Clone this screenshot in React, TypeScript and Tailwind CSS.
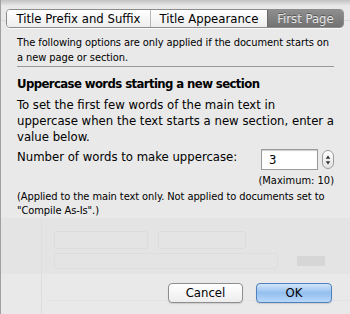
const font = "font-['DejaVu_Sans','Liberation_Sans',sans-serif] [font-stretch:condensed]"

// faint shapes of the window that shows through the translucent sheet
function Backdrop() {
  return (
    <div className="pointer-events-none absolute inset-0">
      <div className="absolute inset-x-0 top-0 h-[6px] bg-gradient-to-b from-[#c2c2c2] to-transparent" />
      <div className="absolute inset-x-0 top-[20px] h-px bg-[#d8d8d8]" />
      <div className="absolute inset-x-0 top-[218px] h-[56px] bg-[#e4e4e4]" />
      <div className="absolute left-[40px] top-[218px] bottom-0 w-px bg-[#dedede]" />
      <div className="absolute left-[53px] top-[231px] h-[18px] w-[94px] rounded-[3px] border border-[#dcdcdc]" />
      <div className="absolute left-[157px] top-[231px] h-[18px] w-[88px] rounded-[3px] border border-[#dcdcdc]" />
      <div className="absolute left-[53px] top-[253px] h-[16px] w-[224px] rounded-[3px] border border-[#dedede]" />
      <div className="absolute left-[296px] top-[256px] h-[10px] w-[28px] bg-[#d6d6d6]" />
      <div className="absolute left-[45px] right-0 top-[300px] h-px bg-[#e3e3e3]" />
    </div>
  )
}

export default function App() {
  return (
    <div className={`relative h-[314px] w-[350px] overflow-hidden border-l border-[#a0a0a0] bg-[#e9e9e9] ${font} text-black`}>
      <Backdrop />

      <div className="relative flex h-full flex-col">
        {/* segmented tabs */}
        <div className="ml-[5px] mt-[9px] flex h-[19px] w-[338px] overflow-hidden rounded-[4px] border border-[#8c8c8c] text-[13px] leading-[17px] shadow-[0_1px_0_rgba(255,255,255,0.7)]">
          <div className="flex w-[144px] items-center justify-center border-r border-[#b8b8b8] bg-gradient-to-b from-white to-[#eeeeee]">
            Title Prefix and Suffix
          </div>
          <div className="flex w-[116px] items-center justify-center bg-gradient-to-b from-white to-[#eeeeee]">
            Title Appearance
          </div>
          <div className="flex flex-1 items-center justify-center border-l border-[#6a6a6a] bg-gradient-to-b from-[#8e8e8e] to-[#727272] text-[#e6e6e6] [text-shadow:0_-1px_0_rgba(0,0,0,0.35)]">
            First Page
          </div>
        </div>

        <div className="flex flex-col px-[16px]">
          <p className="mt-[7px] text-[11px] leading-[15px] tracking-[-0.08px]">
            The following options are only applied if the document starts on a new page or section.
          </p>
          <div className="mt-[1px] h-px bg-[#999999]" />

          <h2 className="mt-[9px] text-[13px] font-bold leading-[16px] tracking-[-0.6px]">
            Uppercase words starting a new section
          </h2>
          <p className="mt-[5px] text-[13px] leading-[16px]">
            To set the first few words of the main text in uppercase when the text starts a new section, enter a value below.
          </p>

          <div className="mt-[4px] flex items-start">
            <span className="text-[13px] leading-[16px]">Number of words to make uppercase:</span>
            <div className="ml-auto flex items-center gap-[4px]">
              <div className="flex h-[21px] w-[57px] items-center border border-[#9b9b9b] bg-white pl-[7px] text-[13px] shadow-[inset_0_1px_1px_rgba(0,0,0,0.2)]">
                3
              </div>
              <div className="flex h-[19px] w-[12px] items-center justify-center rounded-full border border-[#9a9a9a] bg-gradient-to-b from-white to-[#e4e4e4]">
                <svg width="6" height="14" viewBox="0 0 6 14">
                  <path d="M3 2.5 L5.3 5.8 L0.7 5.8 Z" fill="#333" />
                  <path d="M3 11.5 L5.3 8.2 L0.7 8.2 Z" fill="#333" />
                </svg>
              </div>
            </div>
          </div>
          <div className="mt-[4px] text-right text-[11px] leading-[14px]">(Maximum: 10)</div>
          <p className="mt-[2px] text-[11px] leading-[14px] tracking-[-0.08px]">
            (Applied to the main text only. Not applied to documents set to "Compile As-Is".)
          </p>
        </div>

        <div className="mt-auto mb-[11px] flex justify-end gap-[13px] pr-[18px]">
          <button className="h-[20px] w-[75px] rounded-[4px] border border-[#8e8e8e] bg-gradient-to-b from-white to-[#ededed] text-[13px] leading-[18px] shadow-[0_1px_1px_rgba(0,0,0,0.12)]">
            Cancel
          </button>
          <button className="h-[20px] w-[76px] rounded-[4px] border border-[#5180bd] bg-gradient-to-b from-[#d3e5fa] via-[#93bfef] to-[#b9d8fb] text-[13px] leading-[18px] shadow-[0_1px_1px_rgba(0,0,0,0.12)]">
            OK
          </button>
        </div>
      </div>
    </div>
  )
}
